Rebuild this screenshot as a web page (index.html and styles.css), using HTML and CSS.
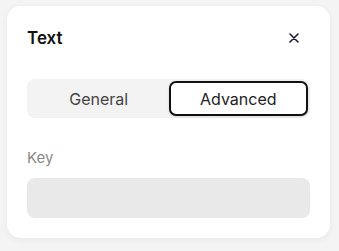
FILE: index.html
```html
<!DOCTYPE html>
<html>
<head>
<meta charset="utf-8">
<link rel="stylesheet" href="styles.css">
</head>
<body>
<div class="card">
  <div class="header">
    <h1 class="title">Text</h1>
    <button class="close" aria-label="Close">
      <svg width="10" height="10" viewBox="0 0 10 10"><path d="M1 1L9 9M9 1L1 9" stroke="#1b1b3a" stroke-width="1.6" stroke-linecap="round"/></svg>
    </button>
  </div>
  <div class="tabs">
    <button class="tab">General</button>
    <button class="tab active">Advanced</button>
  </div>
  <label class="label">Key</label>
  <div class="input"></div>
</div>
</body>
</html>
```
FILE: styles.css
```css
* { box-sizing: border-box; }
html, body { margin: 0; }
body {
  background: #f4f4f4;
  padding: 6px 9px 0 7px;
  font-family: Inter, "Noto Sans", sans-serif;
  width: 339px;
  height: 251px;
  overflow: hidden;
}
.card {
  width: 323px;
  height: 232px;
  background: #fff;
  border-radius: 14px;
  box-shadow: 0 2px 8px rgba(0,0,0,0.05);
  padding: 20px;
  display: flex;
  flex-direction: column;
}
.header {
  display: flex;
  align-items: center;
  justify-content: space-between;
  height: 24px;
}
.title {
  margin: 0;
  font-size: 17px;
  font-weight: 600;
  color: #111;
  line-height: 24px;
}
.close {
  width: 24px;
  height: 24px;
  border: 0;
  background: none;
  padding: 0;
  margin-right: 4px;
  display: flex;
  align-items: center;
  justify-content: center;
}
.tabs {
  margin-top: 29px;
  height: 39px;
  background: #f3f3f3;
  border-radius: 8px;
  padding: 2px;
  display: grid;
  grid-template-columns: 1fr 1fr;
}
.tab {
  border: 0;
  background: none;
  font-family: inherit;
  font-size: 16px;
  color: #444;
  border-radius: 7px;
}
.tab.active {
  background: #fff;
  border: 2px solid #111;
  color: #222;
  box-shadow: 0 1px 3px rgba(0,0,0,0.12);
}
.label {
  margin-top: 30px;
  font-size: 15px;
  line-height: 20px;
  color: #8a8a8a;
}
.input {
  margin-top: 10px;
  height: 40px;
  background: #e9e9e9;
  border-radius: 8px;
}
```
